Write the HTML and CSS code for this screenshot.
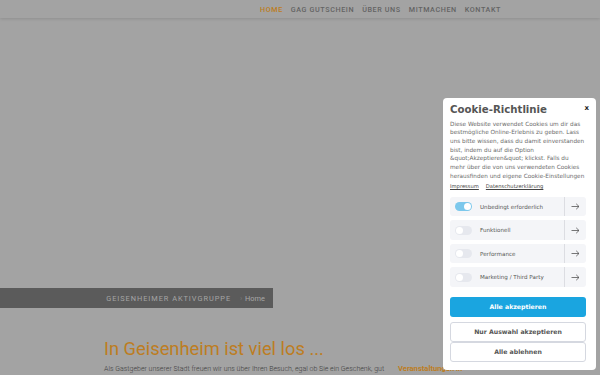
FILE: index.html
```html
<!DOCTYPE html>
<html lang="de">
  <head>
    <meta charset="UTF-8" />
    <meta name="viewport" content="width=device-width, initial-scale=1.0" />
    <title>Geisenheimer Aktivgruppe</title>
    <link rel="stylesheet" href="styles.css">
  </head>
  <body>
    <header class="site-header">
      <nav class="main-nav">
        <a href="#" class="nav-link active">Home</a>
        <a href="#" class="nav-link">GAG Gutschein</a>
        <a href="#" class="nav-link">Über uns</a>
        <a href="#" class="nav-link">Mitmachen</a>
        <a href="#" class="nav-link">Kontakt</a>
      </nav>
    </header>

    <section class="hero">
      <div class="hero-bar">
        <span class="hero-title">Geisenheimer Aktivgruppe</span>
        <span class="crumb"><span class="crumb-sep">›</span> Home</span>
      </div>
    </section>

    <main class="content">
      <div class="main-col">
        <h1>In Geisenheim ist viel los ...</h1>
        <p>Als Gastgeber unserer Stadt freuen wir uns über Ihren Besuch, egal ob Sie ein Geschenk, gut</p>
      </div>
      <aside class="side-col">
        <h3>Veranstaltungen in</h3>
      </aside>
    </main>

    <!-- Cookie-Banner -->
    <div class="cookie-box">
      <div class="cookie-head">
        <h2>Cookie-Richtlinie</h2>
        <span class="cookie-close">x</span>
      </div>
      <p class="cookie-text">
        Diese Website verwendet Cookies um dir das bestmögliche Online-Erlebnis zu geben. Lass uns bitte wissen, dass du damit einverstanden bist, indem du auf die Option &amp;quot;Akzeptieren&amp;quot; klickst. Falls du<br>mehr über die von uns verwendeten Cookies herausfinden und eigene Cookie-Einstellungen
      </p>
      <div class="cookie-links">
        <a href="#">Impressum</a>
        <a href="#">Datenschutzerklärung</a>
      </div>

      <div class="cookie-groups">
        <div class="cookie-row">
          <span class="toggle on"></span>
          <span class="row-label">Unbedingt erforderlich</span>
          <span class="row-arrow"><svg width="9" height="7" viewBox="0 0 9 7"><path d="M0.5 3.5H8M5.2 0.8L8 3.5L5.2 6.2" fill="none" stroke="#555" stroke-width="0.8"/></svg></span>
        </div>
        <div class="cookie-row">
          <span class="toggle"></span>
          <span class="row-label">Funktionell</span>
          <span class="row-arrow"><svg width="9" height="7" viewBox="0 0 9 7"><path d="M0.5 3.5H8M5.2 0.8L8 3.5L5.2 6.2" fill="none" stroke="#555" stroke-width="0.8"/></svg></span>
        </div>
        <div class="cookie-row">
          <span class="toggle"></span>
          <span class="row-label">Performance</span>
          <span class="row-arrow"><svg width="9" height="7" viewBox="0 0 9 7"><path d="M0.5 3.5H8M5.2 0.8L8 3.5L5.2 6.2" fill="none" stroke="#555" stroke-width="0.8"/></svg></span>
        </div>
        <div class="cookie-row">
          <span class="toggle"></span>
          <span class="row-label">Marketing / Third Party</span>
          <span class="row-arrow"><svg width="9" height="7" viewBox="0 0 9 7"><path d="M0.5 3.5H8M5.2 0.8L8 3.5L5.2 6.2" fill="none" stroke="#555" stroke-width="0.8"/></svg></span>
        </div>
      </div>

      <div class="cookie-buttons">
        <button class="btn-accept">Alle akzeptieren</button>
        <button class="btn-outline">Nur Auswahl akzeptieren</button>
        <button class="btn-outline">Alle ablehnen</button>
      </div>
    </div>
  </body>
</html>
```

FILE: styles.css
```css
body {
  margin: 0;
  font-family: Roboto, "Liberation Sans", sans-serif;
  background-color: #a3a3a3;
  height: 375px;
  overflow: hidden;
}
.site-header {
  height: 18px;
  background-color: #a3a3a3;
  box-shadow: 0 1px 3px rgba(0, 0, 0, 0.12);
  position: relative;
}
.main-nav {
  display: flex;
  gap: 8px;
  padding-left: 260px;
  height: 18px;
  align-items: center;
}
.nav-link {
  font-size: 7.2px;
  font-weight: 500;
  letter-spacing: 0.6px;
  text-transform: uppercase;
  color: #636363;
  text-decoration: none;
}
.nav-link.active {
  color: #bd7d22;
}
.hero {
  height: 290px;
  display: flex;
  align-items: flex-end;
}
.hero-bar {
  width: 273px;
  height: 20px;
  box-sizing: border-box;
  background-color: #5b5b5b;
  display: flex;
  align-items: center;
  justify-content: flex-end;
  padding-right: 8px;
  gap: 9px;
}
.hero-title {
  font-size: 7.4px;
  letter-spacing: 0.95px;
  text-transform: uppercase;
  color: #a5a5a5;
}
.crumb {
  font-size: 7.4px;
  color: #a8a8a8;
  white-space: pre;
}
.crumb-sep {
  color: #7a7a7a;
  margin-right: 1px;
}
.content {
  display: flex;
  padding-left: 104px;
  margin-top: 28px;
  gap: 12px;
}
.main-col {
  width: 282px;
}
.main-col h1 {
  margin: 0;
  font-size: 18.3px;
  font-weight: 400;
  color: #bd7d22;
  line-height: 26px;
}
.main-col p {
  margin: 3px 0 0;
  font-size: 7px;
  line-height: 8px;
  font-weight: 300;
  color: #3e3e3e;
  white-space: nowrap;
}
.side-col h3 {
  margin: 28px 0 0;
  font-size: 7.6px;
  line-height: 9px;
  font-weight: 700;
  color: #bd7d22;
  white-space: nowrap;
}

/* Cookie-Banner */
.cookie-box {
  position: fixed;
  left: 443px;
  top: 98px;
  width: 153px;
  box-sizing: border-box;
  padding: 5px 7px 8px;
  background-color: #fff;
  border-radius: 4px;
  font-family: "DejaVu Sans", sans-serif;
}
.cookie-head {
  display: flex;
  justify-content: space-between;
  align-items: flex-start;
}
.cookie-head h2 {
  margin: 0;
  font-size: 10.2px;
  font-weight: 700;
  color: #555;
  line-height: 14px;
}
.cookie-close {
  font-size: 7px;
  font-weight: 700;
  color: #222;
  margin-top: 1px;
}
.cookie-text {
  margin: 2.5px 0 0;
  width: 137px;
  font-size: 5.75px;
  line-height: 8.7px;
  color: #6b6b6b;
}
.cookie-links {
  display: flex;
  gap: 7px;
  margin-top: 3px;
  line-height: 7px;
}
.cookie-links a {
  font-size: 5.2px;
  color: #444;
}
.cookie-groups {
  display: flex;
  flex-direction: column;
  gap: 4px;
  margin-top: 6.5px;
  width: 136px;
}
.cookie-row {
  display: flex;
  align-items: center;
  height: 19.5px;
  background-color: #f4f5f8;
  border-radius: 3px;
}
.toggle {
  width: 17px;
  height: 9px;
  border-radius: 5px;
  background-color: #e6e8ee;
  margin: 0 8px 0 5px;
  position: relative;
}
.toggle::after {
  content: "";
  position: absolute;
  left: 1px;
  top: 1px;
  width: 7px;
  height: 7px;
  border-radius: 50%;
  background-color: #fff;
}
.toggle.on {
  background-color: #7cc8ec;
}
.toggle.on::after {
  left: 9px;
}
.row-label {
  flex: 1;
  font-size: 5.6px;
  color: #555;
}
.row-arrow {
  width: 21px;
  height: 100%;
  border-left: 1px solid #dcdde2;
  display: flex;
  align-items: center;
  justify-content: center;
}
.cookie-buttons {
  display: flex;
  flex-direction: column;
  margin-top: 10px;
  width: 136px;
}
.cookie-buttons button {
  font-family: "DejaVu Sans", sans-serif;
  font-size: 6.2px;
  font-weight: 700;
  height: 20px;
  border-radius: 3px;
  cursor: pointer;
}
.btn-accept {
  background-color: #1aa5e0;
  color: white;
  border: none;
  margin-bottom: 5px;
}
.btn-outline {
  background-color: #fff;
  color: #555;
  border: 1px solid #d5d8e0;
}
```
